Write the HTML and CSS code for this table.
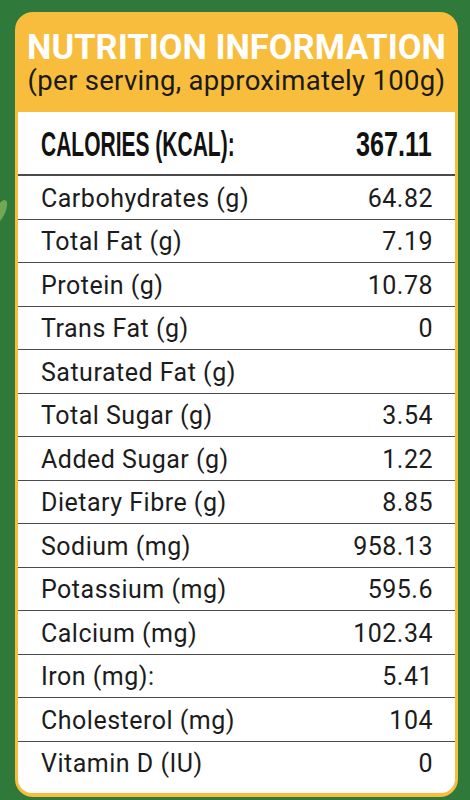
FILE: index.html
```html
<!DOCTYPE html>
<html lang="en">
<head>
    <meta charset="UTF-8">
    <meta name="viewport" content="width=device-width, initial-scale=1.0">
    <title>Nutrition Information</title>
    <link rel="stylesheet" href="styles.css">
</head>
<body>
    <div class="leaf"></div>
    <div class="card">
        <div class="head">
            <h1>NUTRITION INFORMATION</h1>
            <p>(per serving, approximately 100g)</p>
        </div>
        <div class="panel">
            <div class="row calories">
                <span class="big label">CALORIES (KCAL):</span>
                <span class="big value">367.11</span>
            </div>
            <div class="row"><span>Carbohydrates (g)</span><span>64.82</span></div>
            <div class="row"><span>Total Fat (g)</span><span>7.19</span></div>
            <div class="row"><span>Protein (g)</span><span>10.78</span></div>
            <div class="row"><span>Trans Fat (g)</span><span>0</span></div>
            <div class="row"><span>Saturated Fat (g)</span><span></span></div>
            <div class="row"><span>Total Sugar (g)</span><span>3.54</span></div>
            <div class="row"><span>Added Sugar (g)</span><span>1.22</span></div>
            <div class="row"><span>Dietary Fibre (g)</span><span>8.85</span></div>
            <div class="row"><span>Sodium (mg)</span><span>958.13</span></div>
            <div class="row"><span>Potassium (mg)</span><span>595.6</span></div>
            <div class="row"><span>Calcium (mg)</span><span>102.34</span></div>
            <div class="row"><span>Iron (mg):</span><span>5.41</span></div>
            <div class="row"><span>Cholesterol (mg)</span><span>104</span></div>
            <div class="row last"><span>Vitamin D (IU)</span><span>0</span></div>
        </div>
    </div>
</body>
</html>
```

FILE: styles.css
```css
body {
    margin: 0;
    background-color: #2f7a3b;
    font-family: Roboto, "Liberation Sans", sans-serif;
    color: #1c1c1c;
}
/* faint leaf peeking from the left edge */
.leaf {
    position: absolute;
    left: -5px;
    top: 199px;
    width: 10px;
    height: 26px;
    border-radius: 50%;
    background: #b9d46a;
    opacity: 0.5;
    transform: rotate(25deg);
}
.card {
    box-sizing: border-box;
    width: 443px;
    height: 785px;
    margin: 12px 0 0 15px;
    padding: 0 3px 4px 3px;
    background: #f8bd3c;
    border-radius: 18px;
    display: flex;
    flex-direction: column;
}
.head {
    height: 100px;
    text-align: center;
    display: flex;
    flex-direction: column;
    justify-content: center;
}
.head h1 {
    margin: 0;
    color: #fff;
    font-size: 34.5px;
    font-weight: 700;
    line-height: 36px;
    margin-top: 2px;
    white-space: nowrap;
}
.head p {
    margin: 0;
    font-size: 27.5px;
    letter-spacing: 0.3px;
    line-height: 32px;
    color: #1a1a1a;
    white-space: nowrap;
}
.panel {
    flex: 1;
    background: #fff;
    border-radius: 0 0 14px 14px;
    display: flex;
    flex-direction: column;
}
.row {
    box-sizing: border-box;
    height: 43.5px;
    padding: 2px 22px 0 23px;
    display: flex;
    justify-content: space-between;
    align-items: center;
    border-bottom: 1.5px solid #4a4a4a;
    font-size: 25px;
    letter-spacing: 0.5px;
}
.row.calories {
    height: 64px;
    border-bottom-width: 2px;
    padding-top: 2px;
}
.big {
    display: inline-block;
    font-family: "Liberation Sans", Arial, sans-serif;
    font-weight: 700;
    font-size: 35px;
    letter-spacing: 0;
    color: #111;
    white-space: nowrap;
    transform-origin: left center;
}
.big.label {
    width: 194px;
    transform: scaleX(0.6);
}
.big.value {
    width: 77px;
    transform: scaleX(0.72);
}
.row.last {
    flex: 1;
    border-bottom: none;
    padding-bottom: 10px;
}
```
